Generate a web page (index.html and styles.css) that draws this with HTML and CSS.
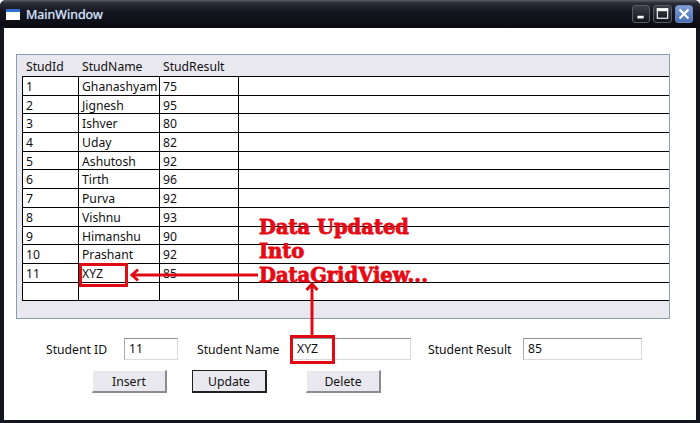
FILE: index.html
```html
<!DOCTYPE html>
<html lang="en">
<head>
    <meta charset="UTF-8">
    <meta name="viewport" content="width=device-width, initial-scale=1.0">
    <title>MainWindow</title>
    <link rel="stylesheet" href="styles.css">
</head>
<body>
    <div class="window">
        <div class="titlebar">
            <svg class="appicon" width="14" height="11" viewBox="0 0 14 11">
                <rect width="14" height="11" fill="#fff"/>
                <rect width="14" height="3" fill="#2f6fd0"/>
            </svg>
            <span class="title">MainWindow</span>
            <div class="controls">
                <div class="ctl">
                    <svg width="18" height="18" viewBox="0 0 18 18"><rect x="5" y="11" width="7" height="3" fill="#fff"/></svg>
                </div>
                <div class="ctl wide">
                    <svg width="18" height="18" viewBox="0 0 18 18"><rect x="3.5" y="3.500" width="11" height="10" fill="none" stroke="#fff" stroke-width="1.2"/><rect x="3" y="3" width="12" height="3" fill="#fff"/></svg>
                </div>
                <div class="ctl close">
                    <svg width="18" height="18" viewBox="0 0 18 18"><path d="M4 4l10 10M14 4L4 14" stroke="#fff" stroke-width="2.6"/></svg>
                </div>
            </div>
        </div>
        <div class="content">
            <div class="datagrid">
                <div class="gridhead">
                    <div class="hcell c1">StudId</div>
                    <div class="hcell c2">StudName</div>
                    <div class="hcell c3">StudResult</div>
                </div>
                <div class="rows">
                    <div class="row"><div class="cell c1">1</div><div class="cell c2">Ghanashyam</div><div class="cell c3">75</div></div>
                    <div class="row"><div class="cell c1">2</div><div class="cell c2">Jignesh</div><div class="cell c3">95</div></div>
                    <div class="row"><div class="cell c1">3</div><div class="cell c2">Ishver</div><div class="cell c3">80</div></div>
                    <div class="row"><div class="cell c1">4</div><div class="cell c2">Uday</div><div class="cell c3">82</div></div>
                    <div class="row"><div class="cell c1">5</div><div class="cell c2">Ashutosh</div><div class="cell c3">92</div></div>
                    <div class="row"><div class="cell c1">6</div><div class="cell c2">Tirth</div><div class="cell c3">96</div></div>
                    <div class="row"><div class="cell c1">7</div><div class="cell c2">Purva</div><div class="cell c3">92</div></div>
                    <div class="row"><div class="cell c1">8</div><div class="cell c2">Vishnu</div><div class="cell c3">93</div></div>
                    <div class="row"><div class="cell c1">9</div><div class="cell c2">Himanshu</div><div class="cell c3">90</div></div>
                    <div class="row"><div class="cell c1">10</div><div class="cell c2">Prashant</div><div class="cell c3">92</div></div>
                    <div class="row"><div class="cell c1">11</div><div class="cell c2">XYZ</div><div class="cell c3">85</div></div>
                    <div class="row"><div class="cell c1"></div><div class="cell c2"></div><div class="cell c3"></div></div>
                </div>
            </div>
            <div class="fields">
                <label class="lbl lbl-id">Student ID</label>
                <div class="input in-id">11</div>
                <label class="lbl lbl-name">Student Name</label>
                <div class="input in-name">XYZ</div>
                <label class="lbl lbl-result">Student Result</label>
                <div class="input in-result">85</div>
            </div>
            <div class="buttons">
                <button class="btn">Insert</button>
                <button class="btn active">Update</button>
                <button class="btn">Delete</button>
            </div>
        </div>
        <svg class="marks" width="700" height="423" viewBox="0 0 700 423">
            <g fill="none" stroke="#e00a14" stroke-width="3">
                <rect x="80.5" y="264.5" width="46" height="21"/>
                <rect x="291.5" y="336.5" width="42" height="26"/>
                <path d="M258 275H133"/>
                <path d="M138 269.5l-6 5.5 6 5.5"/>
                <path d="M312 336V285"/>
                <path d="M306.5 290l5.5-6 5.5 6"/>
            </g>
        </svg>
        <div class="note">Data Updated<br>Into<br>DataGridView...</div>
    </div>
</body>
</html>
```

FILE: styles.css
```css
html, body {
    margin: 0;
    height: 100%;
    overflow: hidden;
}
body {
    font-family: "Noto Sans", Tahoma, sans-serif;
    font-size: 12.2px;
    color: #111;
}
.window {
    position: relative;
    width: 700px;
    height: 423px;
    box-sizing: border-box;
    display: flex;
    flex-direction: column;
    background: #14161f;
    padding: 0 4px 3px 4px;
    border-radius: 6px 6px 0 0;
}
.titlebar {
    height: 28px;
    margin: 0 -4px;
    padding: 0 7px 0 6px;
    display: flex;
    align-items: center;
    background: linear-gradient(#5b5e68 0, #2a2c36 3px, #15161f 12px, #0a0b12 100%);
    border-radius: 6px 6px 0 0;
}
.appicon {
    margin-right: 6px;
}
.title {
    color: #d3e2f6;
    font-size: 12.5px;
    text-shadow: 0 0 1px #9db8dc;
}
.controls {
    margin-left: auto;
    display: flex;
    gap: 3px;
}
.ctl {
    width: 18px;
    height: 18px;
    border: 1px solid #5a5d66;
    border-radius: 3px;
    background: linear-gradient(#3c3e48, #14151c);
    box-sizing: border-box;
    display: flex;
    align-items: center;
    justify-content: center;
}
.wide {
    width: 19px;
}
.close {
    background: linear-gradient(#7f9fd6, #4a6fb6);
    border-color: #6d88b8;
}
.content {
    flex: 1;
    background: #fff;
    padding: 26px 0 0 12px;
}
.datagrid {
    width: 652px;
    height: 263px;
    border: 1px solid #8a9cae;
    background: #e8e8ee;
}
.gridhead {
    height: 21px;
    display: flex;
    align-items: center;
    padding: 1px 0 0 5px;
    box-sizing: border-box;
}
.hcell {
    box-sizing: border-box;
    padding-left: 4px;
}
.rows {
    margin-left: 5px;
    border-left: 1px solid #000;
    background: #fff;
}
.row {
    display: flex;
    height: 18.7px;
    box-sizing: border-box;
    border-top: 1px solid #000;
    line-height: 19px;
}
.row:last-child {
    height: 19px;
    border-bottom: 1px solid #000;
}
.cell {
    box-sizing: border-box;
    padding-left: 3px;
    border-right: 1px solid #000;
}
.c1 { width: 56px; }
.c2 { width: 81px; }
.c3 { width: 79px; }
.fields {
    display: flex;
    align-items: center;
    height: 22px;
    margin-top: 19px;
    padding-left: 30px;
}
.lbl-id { width: 78px; }
.lbl-name { width: 95px; margin-left: 19px; }
.lbl-result { width: 95px; margin-left: 17px; }
.input {
    box-sizing: border-box;
    height: 22px;
    line-height: 20px;
    padding-left: 4px;
    border: 1px solid #d8dadd;
    border-top-color: #8f9399;
    border-left-color: #a8abb0;
}
.in-id { width: 54px; }
.in-name { width: 119px; }
.in-result { width: 119px; }
.buttons {
    display: flex;
    margin-top: 10px;
    padding-left: 76px;
    gap: 25px;
}
.btn {
    width: 75px;
    height: 23px;
    padding: 0;
    font: inherit;
    color: #111;
    background: #e8e8ee;
    border: 1px solid #fff;
    border-right: 2px solid #8c8c90;
    border-bottom: 2px solid #8c8c90;
}
.btn.active {
    border: 1px solid #222;
    border-right-width: 2px;
    border-bottom-width: 2px;
}
.btn.active + .btn {
    margin-left: 14px;
}
.marks {
    position: absolute;
    left: 0;
    top: 0;
}
.note {
    position: absolute;
    left: 259px;
    top: 216px;
    font-family: "DejaVu Serif", serif;
    font-weight: bold;
    font-size: 19.5px;
    line-height: 24px;
    color: #e60a14;
    -webkit-text-stroke: 0.8px #e60a14;
}
```
